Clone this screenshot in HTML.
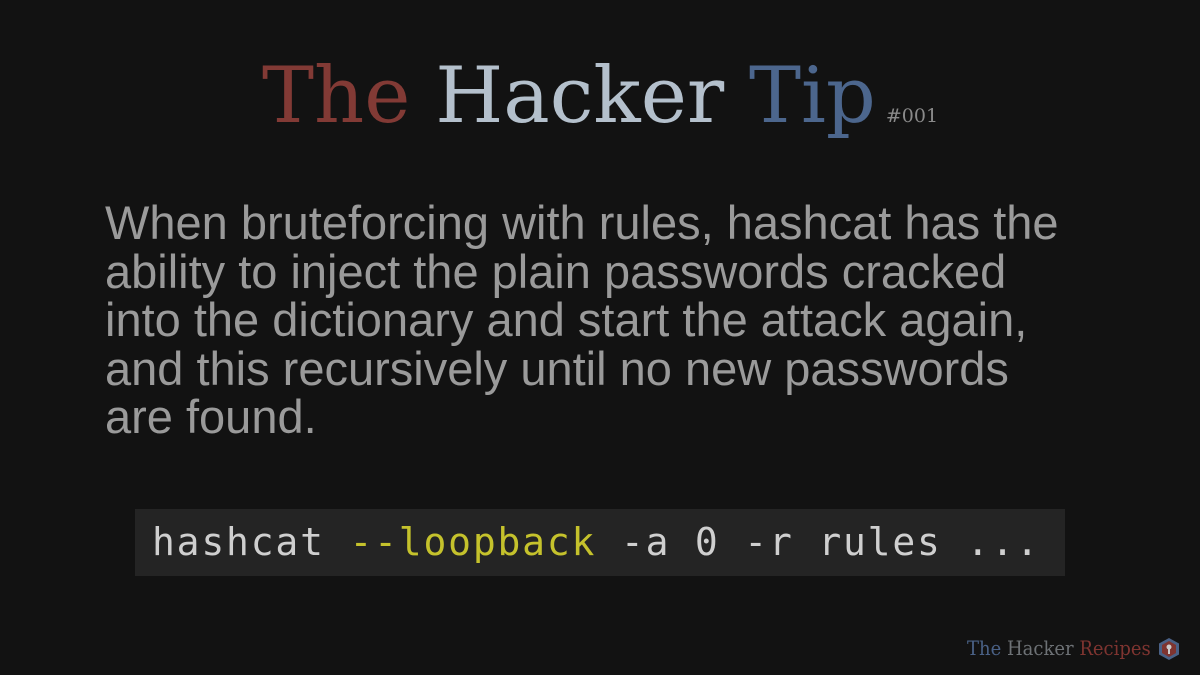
<!DOCTYPE html>
<html><head><meta charset="utf-8"><style>
html,body{margin:0;padding:0;background:#121212;width:1200px;height:675px;overflow:hidden;position:relative}
.title{position:absolute;left:262px;top:46px;font-family:"DejaVu Serif",serif;font-size:78px;line-height:100px;white-space:nowrap;color:#b4c0cc}
.title .r{color:#823a35}.title .b{color:#4c668d}
.title .n{font-size:19px;color:#8a8a8a;margin-left:10px}
.body{position:absolute;left:105px;top:199px;width:970px;font-family:"Liberation Sans",sans-serif;font-size:47px;line-height:48.5px;color:#9a9a9a}
.code{position:absolute;left:135px;top:509px;width:930px;height:67px;background:#242424}
.code span.t{position:absolute;left:17px;top:8px;font-family:"DejaVu Sans Mono",monospace;font-size:38px;line-height:50px;letter-spacing:1.8px;color:#cfcfcf;white-space:pre}
.y{color:#c5c22c}
.foot{position:absolute;left:967px;top:636px;font-family:"DejaVu Serif Condensed","DejaVu Serif",serif;font-size:20px;color:#6d7175;white-space:nowrap}
.foot .b{color:#4a6186}.foot .r{color:#7e3430}
svg{position:absolute;left:1158px;top:637px}
</style></head><body>
<div class="title"><span class="r">The</span> Hacker <span class="b">Tip</span><span class="n">#001</span></div>
<div class="body">When bruteforcing with rules, hashcat has the ability to inject the plain passwords cracked into the dictionary and start the attack again, and this recursively until no new passwords are found.</div>
<div class="code"><span class="t">hashcat <span class="y">--loopback</span> -a 0 -r rules ...</span></div>
<div class="foot"><span class="b">The</span> Hacker <span class="r">Recipes</span></div>
<svg width="22" height="24" viewBox="0 0 22 24"><polygon points="11,1 21,6.5 21,17.5 11,23 1,17.5 1,6.5" fill="#4a6186"/><polygon points="11,4 18,8 18,16 11,20 4,16 4,8" fill="#7e3430"/><circle cx="11" cy="10" r="2.5" fill="#ccc"/><rect x="10" y="11" width="2" height="6" fill="#ccc"/></svg>
</body></html>
